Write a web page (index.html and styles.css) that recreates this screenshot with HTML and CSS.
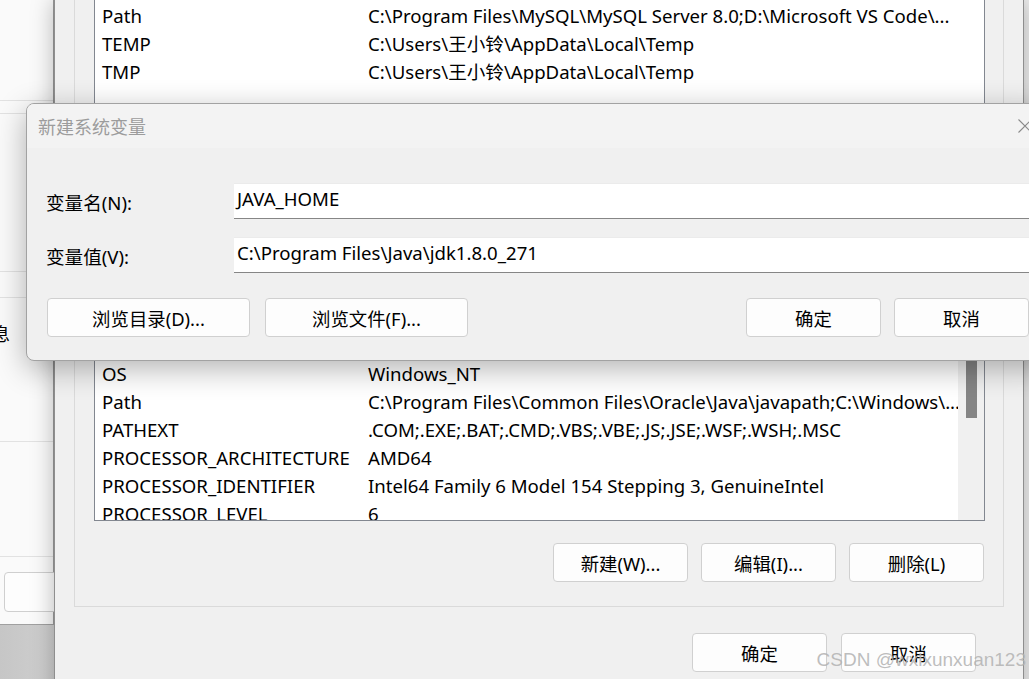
FILE: index.html
```html
<!DOCTYPE html>
<html lang="zh-CN">
<head>
<meta charset="utf-8">
<title>新建系统变量</title>
<link rel="stylesheet" href="styles.css">
</head>
<body>
<div class="win-back">
  <div class="bk-a"></div>
  <div class="bk-sep"></div>
  <div class="bk-b"></div>
  <div class="bk-sep"></div>
  <div class="bk-c"></div>
  <div class="bk-sep"></div>
  <div class="bk-d"></div>
  <div class="bk-sep"></div>
  <div class="bk-e"><div class="bk-text">系统信息</div></div>
  <div class="bk-sep"></div>
  <div class="bk-f"></div>
  <div class="bk-sep"></div>
  <div class="bk-g"><div class="bk-btn"></div></div>
</div>

<div class="win-env">
  <div class="group">
    <div class="list list-user">
      <div class="rows">
        <div class="row"><span>OneDrive</span><span>C:\Users\王小铃\OneDrive</span></div>
        <div class="row"><span>Path</span><span>C:\Program Files\MySQL\MySQL Server 8.0;D:\Microsoft VS Code\...</span></div>
        <div class="row"><span>TEMP</span><span>C:\Users\王小铃\AppData\Local\Temp</span></div>
        <div class="row"><span>TMP</span><span>C:\Users\王小铃\AppData\Local\Temp</span></div>
      </div>
    </div>
    <div class="list list-sys">
      <div class="rows">
        <div class="row"><span>ComSpec</span><span>C:\Windows\system32\cmd.exe</span></div>
        <div class="row"><span>DriverData</span><span>C:\Windows\System32\Drivers\DriverData</span></div>
        <div class="row"><span>MYSQL_HOME</span><span>C:\Program Files\MySQL\MySQL Server 8.0</span></div>
        <div class="row"><span>NUMBER_OF_PROCESSORS</span><span>16</span></div>
        <div class="row"><span>OS</span><span>Windows_NT</span></div>
        <div class="row"><span>Path</span><span>C:\Program Files\Common Files\Oracle\Java\javapath;C:\Windows\...</span></div>
        <div class="row"><span>PATHEXT</span><span>.COM;.EXE;.BAT;.CMD;.VBS;.VBE;.JS;.JSE;.WSF;.WSH;.MSC</span></div>
        <div class="row"><span>PROCESSOR_ARCHITECTURE</span><span>AMD64</span></div>
        <div class="row"><span>PROCESSOR_IDENTIFIER</span><span>Intel64 Family 6 Model 154 Stepping 3, GenuineIntel</span></div>
        <div class="row"><span>PROCESSOR_LEVEL</span><span>6</span></div>
      </div>
      <div class="scrollbar"><div class="thumb"></div></div>
    </div>
    <div class="btn-row">
      <button class="btn">新建(W)...</button>
      <button class="btn">编辑(I)...</button>
      <button class="btn">删除(L)</button>
    </div>
  </div>
  <div class="env-footer">
    <button class="btn">确定</button>
    <button class="btn">取消</button>
  </div>
</div>

<div class="dialog">
  <div class="dlg-title">
    <span class="dlg-title-text">新建系统变量</span>
    <svg class="dlg-close" width="14" height="14" viewBox="0 0 14 14"><path d="M0.5 0.5 L13.5 13.5 M13.5 0.5 L0.5 13.5" stroke="#8a8a8a" stroke-width="1.1" fill="none"/></svg>
  </div>
  <div class="dlg-body">
    <div class="field">
      <div class="field-label">变量名(N):</div>
      <div class="field-input">JAVA_HOME</div>
    </div>
    <div class="field">
      <div class="field-label">变量值(V):</div>
      <div class="field-input">C:\Program Files\Java\jdk1.8.0_271</div>
    </div>
    <div class="dlg-actions">
      <button class="btn btn-wide">浏览目录(D)...</button>
      <button class="btn btn-wide">浏览文件(F)...</button>
      <div class="dlg-actions-right">
        <button class="btn">确定</button>
        <button class="btn">取消</button>
      </div>
    </div>
  </div>
</div>

<div class="watermark">CSDN @wxlxunxuan123</div>
</body>
</html>
```

FILE: styles.css
```css
* { box-sizing: border-box; }
html, body { margin: 0; padding: 0; }
body {
  width: 1029px;
  height: 679px;
  overflow: hidden;
  position: relative;
  background: linear-gradient(to right, #c6c6c6 0, #cfcfcf 54px, #eeeeee 54px);
  font-family: "Noto Sans", "Noto Sans CJK SC", sans-serif;
  font-size: 18.6px;
  color: #000;
}

/* background window on the left */
.win-back {
  position: absolute;
  left: -300px;
  top: -10px;
  width: 354px;
  height: 635px;
  background: #fafafa;
  border-right: 1px solid #9c9c9c;
  border-bottom: 1px solid #a0a0a0;
  display: flex;
  flex-direction: column;
}
.bk-sep { height: 1px; background: #e2e2e2; flex: none; }
.bk-a { height: 110px; }
.bk-b { height: 12px; }
.bk-c { height: 157px; }
.bk-d { height: 25px; }
.bk-e { height: 143px; padding-top: 21px; }
.bk-f { height: 114px; }
.bk-g { padding-top: 15px; padding-left: 304px; }
.bk-text { text-align: right; padding-right: 43px; line-height: 28px; font-family: "Noto Sans CJK SC", sans-serif; font-size: 18px; }
.bk-btn {
  height: 40px;
  width: 80px;
  background: #fdfdfd;
  border: 1px solid #cfcfcf;
  border-radius: 4px;
}

/* environment variables window */
.win-env {
  position: absolute;
  left: 54px;
  top: 0;
  width: 970px;
  height: 720px;
  background: #f0f0f0;
  border-left: 1px solid #8e8e8e;
  border-right: 1px solid #8e8e8e;
  padding-left: 19px;
  box-shadow: 0 0 22px rgba(0, 0, 0, 0.28);
}
.group {
  width: 930px;
  margin-top: -60px;
  border: 1px solid #dadada;
  padding: 32px 19px 24px 19px;
}
.list {
  width: 891px;
  border: 1px solid #828790;
  background: #fff;
  overflow: hidden;
  display: flex;
}
.list-user { height: 141px; }
.list-sys { height: 274px; margin-top: 133px; }
.rows { flex: 1; min-width: 0; }
.row {
  display: grid;
  grid-template-columns: 266px 1fr;
  height: 28px;
  line-height: 28px;
  padding-left: 7px;
  white-space: nowrap;
  overflow: hidden;
}
.scrollbar { width: 26px; flex: none; background: #f0f0f0; }
.thumb { width: 11px; height: 120px; margin-top: 50px; margin-left: 8px; background: #858585; }

.btn {
  font: inherit;
  color: #000;
  width: 135px;
  height: 39px;
  padding: 0;
  background: #fdfdfd;
  border: 1px solid #d0d0d0;
  border-radius: 4px;
  display: flex;
  align-items: center;
  justify-content: center;
  font-family: "Noto Sans", "Noto Sans CJK SC", sans-serif;
  font-size: 18.4px;
}
.btn-wide { width: 203px; }
.btn-row {
  display: flex;
  justify-content: flex-end;
  gap: 13px;
  margin-top: 22px;
}
.env-footer {
  display: flex;
  justify-content: flex-end;
  gap: 14px;
  margin-top: 26px;
  padding-right: 47px;
}

/* new system variable dialog */
.dialog {
  position: absolute;
  left: 26px;
  top: 103px;
  width: 1025px;
  height: 258px;
  background: #f0f0f0;
  border: 1px solid #a2a2a2;
  border-radius: 8px;
  box-shadow: 0 8px 30px rgba(0, 0, 0, 0.3);
  overflow: hidden;
}
.dlg-title {
  height: 44px;
  background: #f3f3f3;
  display: flex;
  align-items: center;
  padding-left: 11px;
  padding-right: 18px;
  color: #9c9c9c;
  font-family: "Noto Sans CJK SC", sans-serif;
  font-size: 18px;
}
.dlg-close { margin-left: auto; display: block; }
.dlg-body {
  display: flex;
  flex-direction: column;
  padding: 35px 21px 23px 19px;
}
.field { display: flex; align-items: center; height: 36px; }
.field + .field { margin-top: 18px; }
.field-label { width: 188px; flex: none; }
.field-input {
  flex: 1;
  height: 36px;
  background: #fff;
  border-top: 1px solid #ebebeb;
  border-bottom: 1px solid #868686;
  padding-left: 3px;
  line-height: 30px;
  white-space: nowrap;
  overflow: hidden;
}
.dlg-actions {
  display: flex;
  gap: 15px;
  margin-top: 25px;
  padding-left: 1px;
}
.dlg-actions-right { display: flex; gap: 13px; margin-left: auto; }

.watermark {
  position: absolute;
  right: 3px;
  top: 648px;
  font-family: "Liberation Sans", sans-serif;
  font-size: 19px;
  line-height: 24px;
  color: rgba(178, 178, 178, 0.85);
  pointer-events: none;
}
```
